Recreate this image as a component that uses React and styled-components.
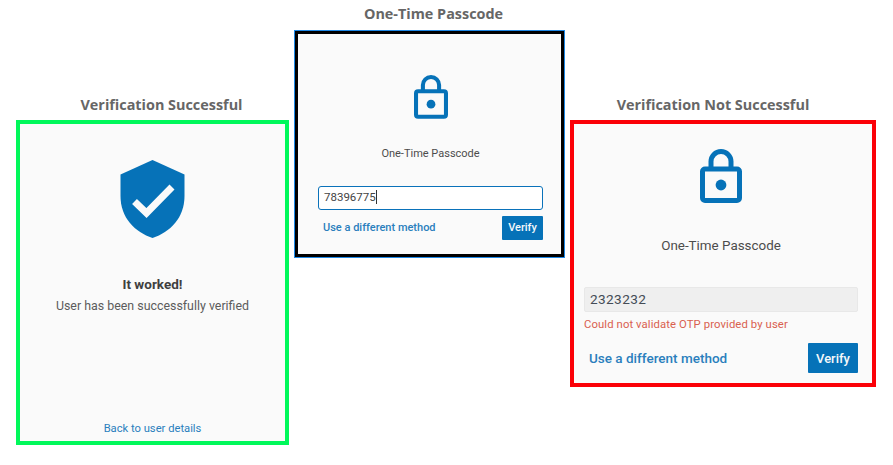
import React from "react";
import styled, { createGlobalStyle } from "styled-components";

const GlobalStyle = createGlobalStyle`
  html, body {
    margin: 0;
    padding: 0;
    background: #ffffff;
  }
  body {
    font-family: "Roboto", "Liberation Sans", sans-serif;
  }
`;

const Page = styled.div`
  display: flex;
  align-items: flex-start;
  gap: 5px;
  width: 893px;
  height: 465px;
  padding-left: 16px;
  box-sizing: border-box;
  overflow: hidden;
`;

const Column = styled.section`
  display: flex;
  flex-direction: column;
  width: ${(p) => p.$width}px;
  padding-top: ${(p) => p.$top}px;
`;

const Heading = styled.h2`
  margin: 0 0 5px;
  height: 20px;
  padding-left: ${(p) => p.$pl || 0}px;
  padding-right: ${(p) => p.$pr || 0}px;
  font-family: "Open Sans", sans-serif;
  font-size: 14.4px;
  line-height: 20px;
  font-weight: 700;
  color: #666666;
  text-align: center;
  white-space: nowrap;
`;

const Card = styled.div`
  display: flex;
  flex-direction: column;
  align-items: center;
  box-sizing: border-box;
  height: ${(p) => p.$height}px;
  background: #fafafa;
  border: 4px solid ${(p) => p.$color};
`;

const PasscodeCard = styled(Card)`
  border: 3px solid #000000;
  box-shadow: 0 0 0 1px #1e88e5;
  margin: 2px 1px 1px;
  padding: 41px 18px 0 20px;
`;

const Label = styled.div`
  font-size: ${(p) => p.$size}px;
  color: #4c4c4c;
  margin-top: ${(p) => p.$gap}px;
  line-height: 16px;
`;

const OtpInput = styled.div`
  align-self: stretch;
  box-sizing: border-box;
  height: 24px;
  margin-top: 24px;
  padding-left: 5px;
  background: #ffffff;
  border: 1.5px solid #0a72ba;
  border-radius: 3px;
  font-size: 11.5px;
  line-height: 21px;
  color: #444444;
`;

const Caret = styled.span`
  display: inline-block;
  width: 1px;
  height: 14px;
  vertical-align: -3px;
  background: #333333;
`;

const ActionRow = styled.div`
  display: flex;
  align-self: stretch;
  align-items: center;
  justify-content: space-between;
  margin-top: ${(p) => p.$gap}px;
`;

const TextLink = styled.a`
  font-size: ${(p) => p.$size}px;
  font-weight: 500;
  color: #2a7fbd;
  text-decoration: none;
  margin-left: ${(p) => p.$indent || 0}px;
  white-space: nowrap;
`;

const VerifyButton = styled.button`
  box-sizing: border-box;
  width: ${(p) => p.$w}px;
  height: ${(p) => p.$h}px;
  padding: 0;
  border: none;
  border-radius: 1px;
  background: #0672b8;
  color: #f4f8fb;
  font-family: inherit;
  font-size: ${(p) => p.$size}px;
  font-weight: 500;
`;

const FailedCard = styled(Card)`
  padding: 25px 14px 0 10px;
`;

const FilledInput = styled.div`
  align-self: stretch;
  box-sizing: border-box;
  height: 25px;
  margin-top: 33px;
  padding-left: 5px;
  background: #efefef;
  border: 1px solid #e8e8e8;
  border-radius: 2px;
  font-size: 13.6px;
  line-height: 23px;
  letter-spacing: 0.4px;
  color: #444c56;
`;

const ErrorText = styled.div`
  align-self: flex-start;
  margin-top: 6px;
  font-size: 11.3px;
  line-height: 14px;
  letter-spacing: 0.1px;
  color: #d9604f;
`;

const SuccessCard = styled(Card)`
  padding-top: 36px;
`;

const SuccessTitle = styled.div`
  margin-top: 38px;
  font-size: 13.5px;
  line-height: 16px;
  font-weight: 700;
  color: #3f3f3f;
`;

const SuccessText = styled.div`
  margin-top: 6px;
  font-size: 12.4px;
  line-height: 16px;
  color: #5c5c5c;
`;

const BackLink = styled(TextLink)`
  margin-top: auto;
  margin-bottom: 6px;
  font-weight: 400;
`;

const LockIcon = ({ width }) => (
  <svg width={width} height={(width * 54) / 42} viewBox="0 0 42 54" style={{ display: "block", flex: "none" }}>
    <path
      d="M11 20V12.5a10 10 0 0 1 20 0V20"
      fill="none"
      stroke="#0672b8"
      strokeWidth="5"
    />
    <rect x="2.5" y="20" width="37" height="31.5" rx="2.5" fill="none" stroke="#0672b8" strokeWidth="5" />
    <circle cx="21" cy="36" r="5.4" fill="#0672b8" />
  </svg>
);

const ShieldIcon = () => (
  <svg width="65" height="78" viewBox="0 0 65 78" style={{ display: "block", flex: "none" }}>
    <path
      d="M32.5 0L64.5 14.5V36C64.5 58 50 72 32.5 78C15 72 0.5 58 0.5 36V14.5Z"
      fill="#0672b8"
    />
    <path d="M14.5 41.5L26.5 53L52 27" fill="none" stroke="#fafafa" strokeWidth="7" />
  </svg>
);

export default function App() {
  return (
    <>
      <GlobalStyle />
      <Page>
        <Column $width={273} $top={95}>
          <Heading $pl={18}>Verification Successful</Heading>
          <SuccessCard $color="#00f85a" $height={325}>
            <ShieldIcon />
            <SuccessTitle>It worked!</SuccessTitle>
            <SuccessText>User has been successfully verified</SuccessText>
            <BackLink href="#" $size={11.2}>Back to user details</BackLink>
          </SuccessCard>
        </Column>

        <Column $width={271} $top={4}>
          <Heading $pl={8}>One-Time Passcode</Heading>
          <PasscodeCard $color="#000000" $height={226}>
            <LockIcon width={34} />
            <Label $size={11} $gap={27}>One-Time Passcode</Label>
            <OtpInput>78396775<Caret /></OtpInput>
            <ActionRow $gap={6}>
              <TextLink href="#" $size={11} $indent={5}>Use a different method</TextLink>
              <VerifyButton $w={41} $h={24} $size={11}>Verify</VerifyButton>
            </ActionRow>
          </PasscodeCard>
        </Column>

        <Column $width={306} $top={95}>
          <Heading $pr={20}>Verification Not Successful</Heading>
          <FailedCard $color="#fb0007" $height={267}>
            <LockIcon width={42} />
            <Label $size={13.4} $gap={35}>One-Time Passcode</Label>
            <FilledInput>2323232</FilledInput>
            <ErrorText>Could not validate OTP provided by user</ErrorText>
            <ActionRow $gap={11}>
              <TextLink href="#" $size={13.5} $indent={5}>Use a different method</TextLink>
              <VerifyButton $w={50} $h={30} $size={13}>Verify</VerifyButton>
            </ActionRow>
          </FailedCard>
        </Column>
      </Page>
    </>
  );
}
